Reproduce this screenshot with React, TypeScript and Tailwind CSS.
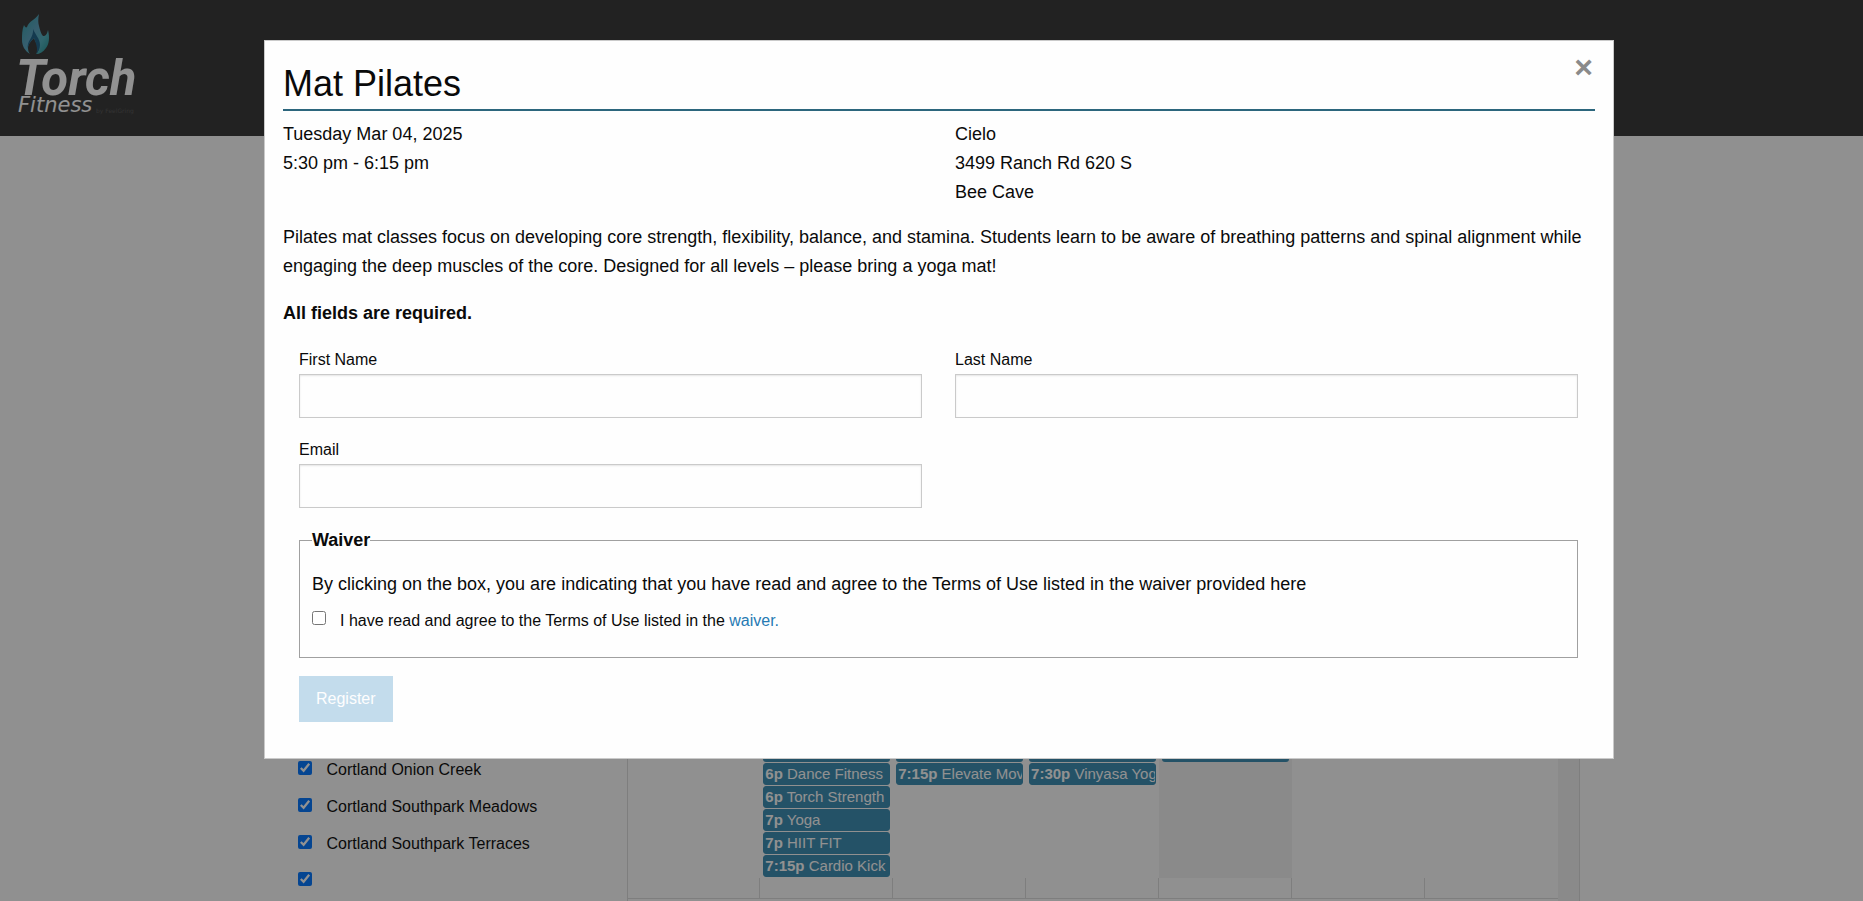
import React, { useState } from "react";

interface EventType {
  time: string;
  title: string;
}

interface FieldProps {
  id: string;
  label: string;
  type?: string;
}

const locations = ["Cortland Onion Creek", "Cortland Southpark Meadows", "Cortland Southpark Terraces", ""];

const days: Array<Array<EventType>> = [
  [],
  [
    { time: "6p", title: "Dance Fitness" },
    { time: "6p", title: "Torch Strength" },
    { time: "7p", title: "Yoga" },
    { time: "7p", title: "HIIT FIT" },
    { time: "7:15p", title: "Cardio Kick" },
  ],
  [{ time: "7:15p", title: "Elevate Movement" }],
  [{ time: "7:30p", title: "Vinyasa Yoga" }],
  [],
  [],
  [],
];

const TODAY = 4;

const Logo = () => (
  <svg viewBox="0 0 136 112" className="h-28 w-[136px] overflow-visible" role="img" aria-label="Torch Fitness">
    <defs>
      <linearGradient id="flame" x1="0" y1="0" x2="1" y2="1">
        <stop offset="0" stopColor="#2f9fa6" />
        <stop offset="0.45" stopColor="#5aa3c0" />
        <stop offset="0.7" stopColor="#4fb0bd" />
        <stop offset="1" stopColor="#1f8f8f" />
      </linearGradient>
    </defs>
    <path
      fill="url(#flame)"
      d="M21 2C20 7 20 11 21 14C22 18 23 22 25 24C28 24 29 22 30 18C32 26 31 32 28 36C25 40 22 42 18 42C20 40 21 38 20 35C19 31 17 30 16 26C13 29 10 32 10 36C10 39 11 41 12 42C7 39 4 34 4 28C4 22 4 18 6 13C7 15 8 16 9 15C11 9 17 8 21 2Z"
    />
    <path
      fill="#1c6288"
      d="M15 17C17 22 22 27 22 33C22 37 20 40 18 42C20 38 19 34 16 26C13 29 10 32 10 37C8 29 16 26 15 17Z"
    />
    <text x="-2" y="83" fill="#fff" fontFamily="Roboto, sans-serif" fontStyle="italic" fontWeight="700" fontSize="49">
      Torch
    </text>
    <text x="0" y="100" fill="#fff" fontFamily="DejaVu Sans, sans-serif" fontStyle="italic" fontSize="21">
      Fitness
    </text>
    <text x="78" y="101" fill="#555" fontFamily="DejaVu Sans, sans-serif" fontSize="6">
      by FeelGring
    </text>
  </svg>
);

const Field = ({ id, label, type = "text" }: FieldProps) => (
  <div className="pr-[17px] pl-4">
    <label htmlFor={id} className="block text-base leading-7">{label}</label>
    <input
      id={id}
      type={type}
      className="mb-[18px] block h-11 w-full border border-[#cacaca] bg-[#fefefe] px-2 shadow-[inset_0_1px_2px_rgba(10,10,10,0.1)]"
    />
  </div>
);

const Calendar = () => (
  <div className="flex flex-1 border-x border-[#ddd]">
    <div className="grid flex-1 grid-cols-7 self-start">
      {days.map((events, i) => (
        <div key={i} className="flex min-w-0 flex-col border-b border-[#ddd]">
          <div className={i === TODAY ? "flex-1 bg-[#f3f3f3] px-[3px]" : "flex-1 px-[3px]"}>
            {i > 0 && i < 5 && <div className="mb-px h-[22px] rounded-[3px] bg-[#3a8db3]" />}
            {events.map((event) => (
              <a
                key={event.time + event.title}
                href="#"
                className="mb-px block h-[22px] overflow-hidden rounded-[3px] border border-[#3a8db3] bg-[#3a8db3] px-px text-[15px] leading-5 whitespace-nowrap text-white"
              >
                <span className="font-bold">{event.time}</span> {event.title}
              </a>
            ))}
          </div>
          <div className={i < 6 ? "h-5 border-r border-[#ddd]" : "h-5"} />
        </div>
      ))}
    </div>
    <div className="w-[21px] bg-[#f3f3f3]" />
  </div>
);

const RegisterModal = () => {
  const [agreed, setAgreed] = useState(false);

  return (
    <div role="dialog" aria-labelledby="class-title" className="relative w-full max-w-[1350px] border border-[#cacaca] bg-[#fefefe] p-[18px]">
      <button type="button" aria-label="Close" className="absolute top-2 right-5 text-[32px] leading-9 font-bold text-[#8a8a8a]">
        ×
      </button>
      <h2 id="class-title" className="border-b-2 border-[#2c667d] text-4xl leading-[50px]">Mat Pilates</h2>
      <div className="mt-[9px] mb-4 grid grid-cols-2">
        <p>Tuesday Mar 04, 2025<br />5:30 pm - 6:15 pm</p>
        <p className="pl-4">Cielo<br />3499 Ranch Rd 620 S<br />Bee Cave</p>
      </div>
      <p className="mb-[18px]">
        Pilates mat classes focus on developing core strength, flexibility, balance, and stamina. Students learn to be
        aware of breathing patterns and spinal alignment while engaging the deep muscles of the core. Designed for all
        levels – please bring a yoga mat!
      </p>
      <p className="mb-[18px] font-bold">All fields are required.</p>
      <form onSubmit={(e) => e.preventDefault()}>
        <div className="grid grid-cols-2">
          <Field id="first-name" label="First Name" />
          <Field id="last-name" label="Last Name" />
          <Field id="email" label="Email" type="email" />
        </div>
        <div className="pr-[17px] pl-4">
          <fieldset className="mb-[18px] border border-[#a0a0a0] px-3 pb-[22px]">
            <legend className="font-bold">Waiver</legend>
            <p className="mt-[15px] mb-2">
              By clicking on the box, you are indicating that you have read and agree to the Terms of Use listed in the
              waiver provided here
            </p>
            <div className="flex items-start text-base leading-7">
              <input
                id="agree"
                type="checkbox"
                checked={agreed}
                onChange={(e) => setAgreed(e.target.checked)}
                className="mt-1 mr-[14px] size-[14px]"
              />
              <label htmlFor="agree">
                I have read and agree to the Terms of Use listed in the <a href="#" className="text-[#267ab3]">waiver.</a>
              </label>
            </div>
          </fieldset>
          <button
            type="submit"
            disabled={!agreed}
            className="mb-[18px] block bg-[#1779ba] px-[17px] py-[14px] text-base leading-[18px] text-[#fefefe] disabled:opacity-25"
          >
            Register
          </button>
        </div>
      </form>
    </div>
  );
};

const App = () => {
  return (
    <div className="relative h-screen overflow-hidden bg-[#fefefe] font-['Liberation_Sans',Arial,sans-serif] text-lg leading-[29px] text-[#0a0a0a]">
      <header className="bg-[#363636] px-[18px] py-3">
        <Logo />
      </header>
      <main className="mx-auto flex max-w-[1350px] pt-[604px] pr-[27px] pl-[41px]">
        <ul className="w-[329px] pt-[17px]">
          {locations.map((name, i) => (
            <li key={i} className="flex h-[37px] items-start text-base leading-6">
              <input id={`location-${i}`} type="checkbox" defaultChecked aria-label={name || "Other"} className="mt-1 mr-[15px] size-[14px]" />
              <label htmlFor={`location-${i}`} className="pt-px">{name}</label>
            </li>
          ))}
        </ul>
        <Calendar />
      </main>
      {/* overlay */}
      <div className="absolute inset-0 flex items-start justify-center bg-[#0a0a0a]/45 pt-10 pl-[15px]">
        <RegisterModal />
      </div>
    </div>
  );
};

export default App;
